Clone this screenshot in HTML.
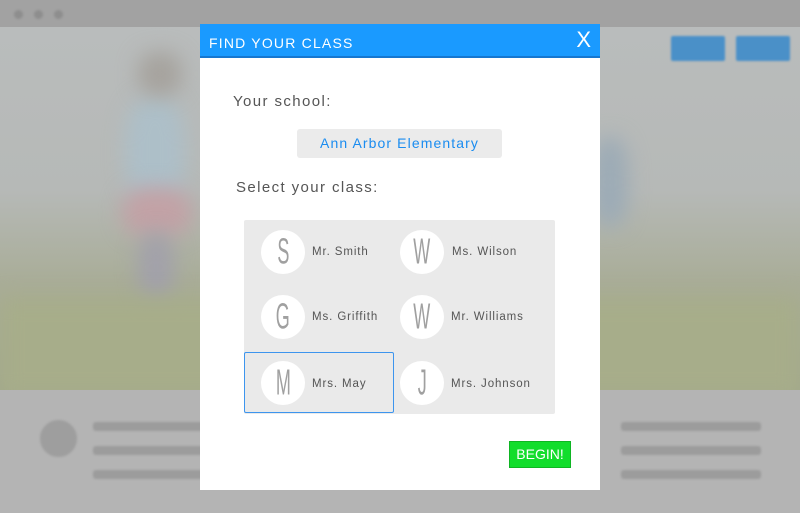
<!DOCTYPE html>
<html><head><style>
*{margin:0;padding:0;box-sizing:border-box}
body{width:800px;height:513px;overflow:hidden;position:relative;font-family:"Liberation Sans",sans-serif;background:#b4b4b4}
.top{position:absolute;left:0;top:0;width:800px;height:27px;background:#a2a2a2}
.dot{position:absolute;top:10px;width:9px;height:9px;border-radius:50%;background:#8e8e8e;filter:blur(1px)}
.photo{position:absolute;left:0;top:27px;width:800px;height:363px;background:linear-gradient(180deg,#b9bcbc 0%,#b6b9b7 45%,#a9ad98 70%,#a2a88c 100%);overflow:hidden}
.blob{position:absolute;filter:blur(10px);border-radius:40%}
.btn{position:absolute;top:36px;height:25px;background:#4a90c8;border-radius:2px;filter:blur(1px)}
.line{position:absolute;height:9px;background:#9c9c9c;border-radius:3px;filter:blur(1px)}
.modal{position:absolute;left:200px;top:24px;width:400px;height:466px;background:#fff}
.hdr{height:34px;background:#1a9aff;border-bottom:2px solid #1677d0;color:#fff;font-size:14px;letter-spacing:1.2px;padding:11px 0 0 9px;position:relative}
.x{position:absolute;right:9px;top:3px;font-size:22px;letter-spacing:0}
.lbl{position:absolute;color:#555;font-size:15px;letter-spacing:1.4px}
.school{position:absolute;left:97px;top:105px;width:205px;height:29px;background:#ebebeb;border-radius:3px;color:#1a8cf0;font-size:14px;letter-spacing:1.1px;text-align:center;line-height:28px}
.grid{position:absolute;left:44px;top:196px;width:311px;height:194px;background:#eaeaea;border-radius:2px}
.sel{position:absolute;left:0;top:132px;width:150px;height:61px;border:1.5px solid #3d95ee;border-radius:2px}
.c{position:absolute;width:44px;height:44px;border-radius:50%;background:#fff;text-align:center;overflow:hidden}
.c span{display:inline-block;font-size:25px;color:#a0a0a0;transform:scale(0.72,1.45);line-height:44px}
.n{position:absolute;font-size:11.5px;color:#555;letter-spacing:0.9px}
.begin{position:absolute;left:309px;top:417px;width:62px;height:27px;background:#12dd2c;border:1px solid #0fb523;color:#fff;font-size:14px;text-align:center;line-height:25px;font-family:"Liberation Sans Narrow","Liberation Sans",sans-serif}
</style></head><body>
<div class="photo">
<div class="blob" style="left:125px;top:70px;width:60px;height:110px;background:#adbfc8"></div>
<div class="blob" style="left:122px;top:160px;width:70px;height:50px;background:#c2a2a6"></div>
<div class="blob" style="left:138px;top:25px;width:44px;height:44px;background:#a6a39e"></div>
<div class="blob" style="left:138px;top:205px;width:36px;height:70px;background:#a2a1aa"></div>
<div class="blob" style="left:592px;top:110px;width:36px;height:90px;background:#9cabb6"></div>
<div class="blob" style="left:0;top:270px;width:800px;height:100px;background:#a7ad8a;border-radius:0"></div>
</div>
<div class="top"></div>
<div class="dot" style="left:14px"></div><div class="dot" style="left:34px"></div><div class="dot" style="left:54px"></div>
<div class="btn" style="left:671px;width:54px"></div>
<div class="btn" style="left:736px;width:54px"></div>
<div style="position:absolute;left:40px;top:420px;width:37px;height:37px;border-radius:50%;background:#9e9e9e;filter:blur(1px)"></div>
<div class="line" style="left:93px;top:422px;width:120px"></div>
<div class="line" style="left:93px;top:446px;width:120px"></div>
<div class="line" style="left:93px;top:470px;width:120px"></div>
<div class="line" style="left:621px;top:422px;width:140px"></div>
<div class="line" style="left:621px;top:446px;width:140px"></div>
<div class="line" style="left:621px;top:470px;width:140px"></div>
<div class="modal">
<div class="hdr">FIND YOUR CLASS<span class="x">X</span></div>
<div class="lbl" style="left:33px;top:69px">Your school:</div>
<div class="school">Ann Arbor Elementary</div>
<div class="lbl" style="left:36px;top:155px">Select your class:</div>
<div class="grid">
<div class="sel"></div>
<div class="c" style="left:17px;top:10px"><span>S</span></div><div class="n" style="left:68px;top:26px">Mr. Smith</div>
<div class="c" style="left:156px;top:10px"><span>W</span></div><div class="n" style="left:208px;top:26px">Ms. Wilson</div>
<div class="c" style="left:17px;top:75px"><span>G</span></div><div class="n" style="left:68px;top:91px">Ms. Griffith</div>
<div class="c" style="left:156px;top:75px"><span>W</span></div><div class="n" style="left:207px;top:91px">Mr. Williams</div>
<div class="c" style="left:17px;top:141px"><span>M</span></div><div class="n" style="left:68px;top:158px">Mrs. May</div>
<div class="c" style="left:156px;top:141px"><span>J</span></div><div class="n" style="left:207px;top:158px">Mrs. Johnson</div>
</div>
<div class="begin">BEGIN!</div>
</div>
</body></html>
